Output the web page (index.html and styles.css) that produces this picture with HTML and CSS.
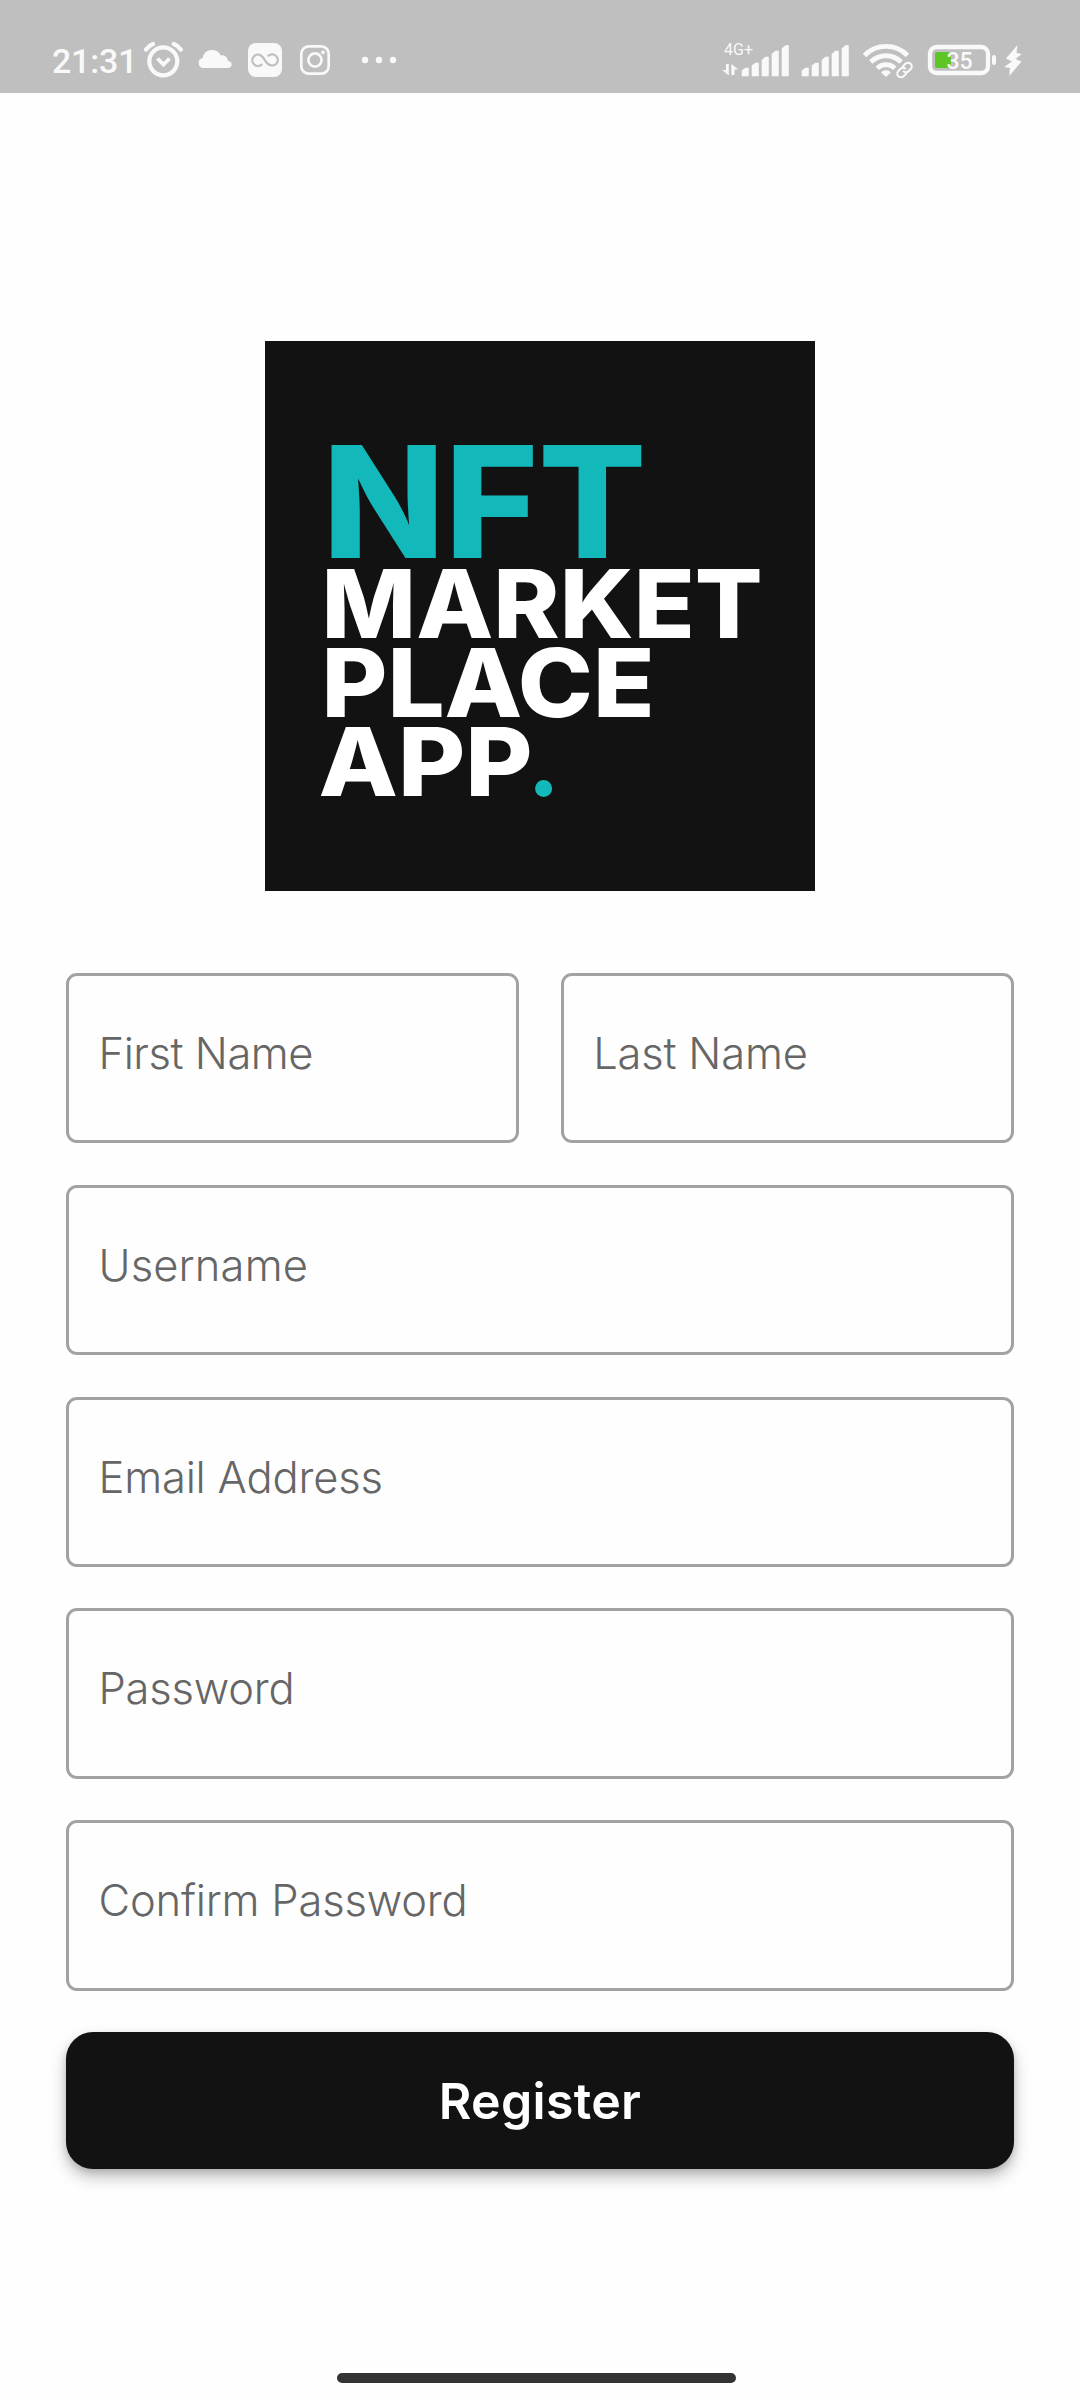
FILE: index.html
```html
<!DOCTYPE html>
<html lang="en">
<head>
<meta charset="utf-8">
<title>Register</title>
<link rel="stylesheet" href="styles.css">
</head>
<body>
<header class="status">
  <span class="time">21:31</span>
  <svg class="icon" width="48" height="93" viewBox="140 0 48 93">
    <circle cx="163.3" cy="61.3" r="14" fill="none" stroke="#f9f9f9" stroke-width="4.300"/>
    <path d="M157.5 58.5l6 6 6-6" fill="none" stroke="#f9f9f9" stroke-width="3.8"/>
    <path d="M146 49.5q3-4 7-5.5M173.8 44q4 1.5 7 5.500" fill="none" stroke="#f9f9f9" stroke-width="4.400" stroke-linecap="round"/>
  </svg>
  <svg class="icon" width="52" height="93" viewBox="188 0 52 93">
    <path d="M203.500 68a5 5 0 0 1-.8-9.900c.5-4.600 4.300-8.100 9.300-8.100 4 0 7.300 2.200 8.700 5.400 3.700-.7 6.800 1.700 7.300 5.600 5.200.3 4.800 7-.3 7z" fill="#f9f9f9"/>
  </svg>
  <svg class="icon" width="50" height="93" viewBox="240 0 50 93">
    <rect x="248" y="43" width="34" height="34" rx="8" fill="#f9f9f9"/>
    <path d="M261.500 64.600a5.600 5.600 0 1 1-.2-8.800c4.200 2.500 4 9.800 11 9.700a5.600 5.600 0 1 0-3.800-9.800" fill="none" stroke="#bfbfbf" stroke-width="2.200" stroke-linecap="round"/>
  </svg>
  <svg class="icon" width="50" height="93" viewBox="290 0 50 93">
    <rect x="301.300" y="46.300" width="27.400" height="27.400" rx="7.500" fill="none" stroke="#f9f9f9" stroke-width="2.700"/>
    <circle cx="315" cy="60" r="6.600" fill="none" stroke="#f9f9f9" stroke-width="2.700"/>
    <circle cx="323" cy="52.300" r="1.900" fill="#f9f9f9"/>
  </svg>
  <svg class="icon" width="60" height="93" viewBox="340 0 60 93" fill="#f9f9f9">
    <circle cx="365" cy="60" r="3.200"/><circle cx="379" cy="60" r="3.200"/><circle cx="393" cy="60" r="3.200"/>
  </svg>
  <svg class="icon push" width="80" height="93" viewBox="715 0 80 93" fill="#f9f9f9">
    <text class="net" x="724" y="55" textLength="29" lengthAdjust="spacingAndGlyphs">4G+</text>
    <path d="M726 64h2.800v11.500l-6.600-5.500h3.800zM731.400 75V64l6.800 5.500h-3.800V75z"/>
    <path d="M742 76v-5.500l3.500-2.500h3V76zM752 76V65.500l3.500-2.500h3V76zM762 76V60l3.500-3h3v19zM772 76V54l3.500-3h3v25zM782 76V48.500l3.500-3h3V76z" stroke="#f9f9f9" stroke-width=".6" stroke-linejoin="round"/>
  </svg>
  <svg class="icon" width="60" height="93" viewBox="795 0 60 93" fill="#f9f9f9">
    <path d="M802 76v-5.500l3.500-2.500h3V76zM812 76V65.500l3.500-2.500h3V76zM822 76V60l3.500-3h3v19zM832 76V54l3.500-3h3v25zM842 76V48.500l3.500-3h3V76z" stroke="#f9f9f9" stroke-width=".6" stroke-linejoin="round"/>
  </svg>
  <svg class="icon" width="65" height="93" viewBox="855 0 65 93" fill="none" stroke="#f9f9f9">
    <path d="M864.500 55.500a30 30 0 0 1 43 0M870.800 62a21.500 21.500 0 0 1 30.400 0M877.200 68.200a12.500 12.500 0 0 1 17.600 0" stroke-width="4.900"/>
    <path d="M886 77l-5-4.800a7.200 7.200 0 0 1 10 0z" fill="#f9f9f9" stroke="none"/>
    <g transform="rotate(-45 904.500 70)" stroke="#bfbfbf" stroke-width="5"><rect x="895.500" y="66.500" width="18" height="7" rx="3.500"/></g>
    <g transform="rotate(-45 904.500 70)" stroke-width="2.100" stroke-linecap="round"><path d="M903 73.700h-3.500a3.700 3.700 0 0 1 0-7.400h3a3.700 3.700 0 0 1 3.600 3.200M906 66.300h3.500a3.700 3.700 0 0 1 0 7.400h-3a3.700 3.700 0 0 1-3.600-3.200"/></g>
  </svg>
  <svg class="icon" width="80" height="93" viewBox="920 0 80 93">
    <rect x="930" y="47" width="58" height="26" rx="6.500" fill="none" stroke="#f9f9f9" stroke-width="4.300"/>
    <rect x="935" y="52" width="16" height="16" rx="2" fill="#5fc524"/>
    <rect x="992" y="55" width="4" height="10" rx="2" fill="#f9f9f9"/>
    <text class="level" x="946.500" y="69" textLength="26">35</text>
  </svg>
  <svg class="icon" width="80" height="93" viewBox="1000 0 80 93" fill="#f9f9f9">
    <path d="M1017.500 45l-11.500 13.500 6 3-8 5.500 6 1-.8 8 12.300-14.500-6-2.500 6.300-5-5.300-1z"/>
  </svg>
</header>
<main class="page">
  <svg class="logo" width="550" height="550" viewBox="0 0 550 550" role="img" aria-label="NFT Marketplace App">
    <rect width="550" height="550" fill="#121212"/>
    <text class="nft" x="57.500" y="217" textLength="324" lengthAdjust="spacingAndGlyphs">NFT</text>
    <text class="word" x="56.600" y="296.600" textLength="441" lengthAdjust="spacingAndGlyphs">MARKET</text>
    <text class="word" x="56.600" y="375.500" textLength="333" lengthAdjust="spacingAndGlyphs">PLACE</text>
    <text class="word" x="53.500" y="454.700" textLength="214" lengthAdjust="spacingAndGlyphs">APP</text>
    <circle cx="278.600" cy="447.500" r="8.500" fill="#13b8ba"/>
  </svg>
  <form class="form">
    <div class="row">
      <label class="field"><span class="hint first">First Name</span></label>
      <label class="field"><span class="hint last">Last Name</span></label>
    </div>
    <label class="field"><span class="hint user">Username</span></label>
    <label class="field"><span class="hint email">Email Address</span></label>
    <label class="field"><span class="hint pass">Password</span></label>
    <label class="field"><span class="hint confirm">Confirm Password</span></label>
    <button class="register" type="button">Register</button>
  </form>
</main>
<footer class="nav"><div class="handle"></div></footer>
</body>
</html>
```
FILE: styles.css
```css
* { box-sizing: border-box; }
body {
  margin: 0;
  width: 1080px;
  height: 2400px;
  display: flex;
  flex-direction: column;
  background: #fefefe;
  font-family: Inter, sans-serif;
}
.status {
  height: 93px;
  flex: none;
  display: flex;
  background: #bfbfbf;
}
.icon { flex: none; display: block; }
.push { margin-left: auto; }
.time {
  width: 140px;
  padding-left: 52px;
  font: 500 34px/122px Roboto, sans-serif;
  color: #f9f9f9;
  letter-spacing: -0.2px;
  white-space: nowrap;
}
.net { font: 400 16.5px Roboto, sans-serif; }
.level { font: 500 23px Roboto, sans-serif; fill: #f9f9f9; }
.page {
  flex: 1;
  padding: 248px 66px 0;
  display: flex;
  flex-direction: column;
  align-items: center;
}
.logo { display: block; flex: none; }
.nft { font: 800 155.4px Inter, sans-serif; fill: #13b8ba; }
.word { font: 800 95.4px Inter, sans-serif; fill: #fff; }
.form {
  width: 100%;
  margin-top: 82px;
  display: flex;
  flex-direction: column;
  gap: 41.4px;
}
.row { display: flex; gap: 41.5px; }
.row .field { flex: 1; }
.field {
  height: 170.4px;
  padding: 51px 30px 0 29.5px;
  border: 3px solid #a2a2a2;
  border-radius: 11px;
}
.hint {
  display: block;
  font-size: 43.5px;
  line-height: 53px;
  font-weight: 300;
  color: #666;
  white-space: nowrap;
}
.first { letter-spacing: -0.45px; }
.last, .pass { letter-spacing: -0.2px; }
.user { letter-spacing: 0.15px; }
.email, .confirm { letter-spacing: -0.2px; }
.register {
  height: 137.5px;
  border: 0;
  border-radius: 27px;
  background: #121212;
  color: #fff;
  font: 600 50px Inter, sans-serif;
  letter-spacing: 0.3px;
  box-shadow: 0 8px 16px rgba(0, 0, 0, .25), 0 3px 6px rgba(0, 0, 0, .12);
}
.nav {
  height: 27px;
  flex: none;
  display: flex;
  padding-left: 337px;
}
.handle {
  width: 399px;
  height: 10px;
  border-radius: 5px;
  background: #333;
}
```
